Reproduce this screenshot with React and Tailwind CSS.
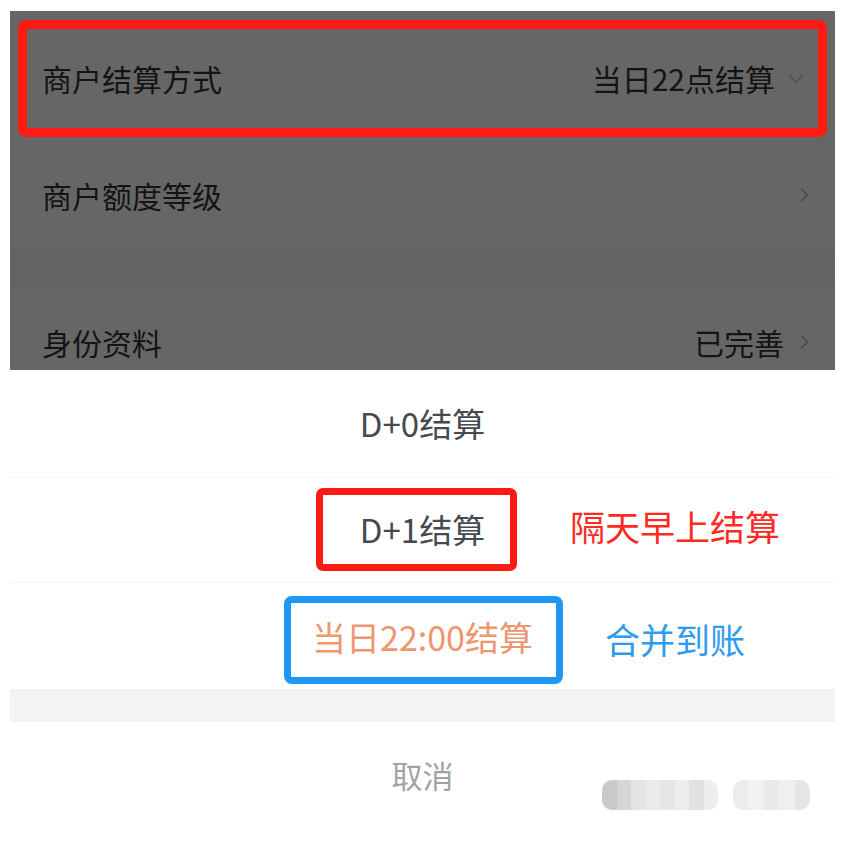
import React from "react";

const FONT = { fontFamily: '"Noto Sans CJK SC", "Noto Sans", sans-serif' };

function ChevronRight({ className }) {
    return (
        <svg viewBox="0 0 12 20" className={className} fill="none" stroke="currentColor" strokeWidth="1.8" strokeLinecap="round" strokeLinejoin="round">
            <path d="M2 2l8 8-8 8" />
        </svg>
    );
}

function ChevronDown({ className }) {
    return (
        <svg viewBox="0 0 20 12" className={className} fill="none" stroke="currentColor" strokeWidth="1.8" strokeLinecap="round" strokeLinejoin="round">
            <path d="M2 2l8 8 8-8" />
        </svg>
    );
}

// pixelated blur that hides a watermark
const blobA = ["#c9c9c9", "#d6d6d6", "#e4e4e4", "#ebebeb", "#e6e6e6", "#ededed", "#e2e2e2", "#eeeeee"];
const blobB = ["#ececec", "#f1f1f1", "#e9e9e9", "#efefef", "#e5e5e5"];

export default function App() {
    return (
        <div className="min-h-[865px] bg-white pt-[11px] pl-[10px] pr-[8px]" style={FONT}>
            {/* dimmed settings page */}
            <div className="bg-[#666666] h-[359px] overflow-hidden">
                <div className="px-[8px] pt-[9px] pb-[3px]">
                    <div className="h-[117px] border-[9px] border-[#ff1a14] rounded-[8px] flex items-center justify-between pl-[15px] pr-[14px]">
                        <span className="text-[30px] text-[#141414]">商户结算方式</span>
                        <div className="flex items-center gap-[13px]">
                            <span className="text-[30px] text-[#141414]">当日22点结算</span>
                            <ChevronDown className="w-[16px] h-[10px] text-[#505050]" />
                        </div>
                    </div>
                </div>
                <div className="h-[110px] flex items-center justify-between pl-[32px] pr-[26px]">
                    <span className="text-[30px] text-[#141414]">商户额度等级</span>
                    <ChevronRight className="w-[9px] h-[16px] text-[#484848]" />
                </div>
                <div className="h-[36px] bg-[#636363]" />
                <div className="h-[112px] flex items-center justify-between pl-[32px] pr-[26px]">
                    <span className="text-[30px] text-[#141414]">身份资料</span>
                    <div className="flex items-center gap-[16px]">
                        <span className="text-[30px] text-[#141414]">已完善</span>
                        <ChevronRight className="w-[9px] h-[16px] text-[#484848]" />
                    </div>
                </div>
            </div>

            {/* action sheet */}
            <div className="bg-white">
                <div className="h-[108px] flex items-center justify-center border-b border-[#f3f4f4]">
                    <span className="text-[33px] text-[#454a50]">D+0结算</span>
                </div>
                <div className="relative h-[105px] flex items-center justify-center border-b border-[#f3f4f4]">
                    <span className="text-[33px] text-[#454a50]">D+1结算</span>
                    <div className="absolute left-[306px] top-[10px] w-[201px] h-[83px] border-[7px] border-[#ff1a14] rounded-[7px]" />
                    <span className="absolute left-[560px] top-[22px] text-[35px] text-[#ff2a22]">隔天早上结算</span>
                </div>
                <div className="relative h-[106px] flex items-center justify-center">
                    <span className="text-[34px] text-[#ee9670]">当日22:00结算</span>
                    <div className="absolute left-[274px] top-[13px] w-[279px] h-[88px] border-[7px] border-[#1e97f6] rounded-[8px]" />
                    <span className="absolute left-[595px] top-[30px] text-[35px] text-[#2f9bef]">合并到账</span>
                </div>
                <div className="h-[33px] bg-[#f2f4f4]" />
                <div className="relative h-[106px] flex items-center justify-center">
                    <span className="text-[31px] text-[#a0a3a6]">取消</span>
                    <div className="absolute left-[592px] top-[58px] flex gap-[15px]">
                        <div className="flex w-[116px] h-[30px] rounded-[10px] overflow-hidden">
                            {blobA.map((c, i) => (
                                <div key={i} className="flex-1" style={{ backgroundColor: c }} />
                            ))}
                        </div>
                        <div className="flex w-[77px] h-[30px] rounded-[10px] overflow-hidden">
                            {blobB.map((c, i) => (
                                <div key={i} className="flex-1" style={{ backgroundColor: c }} />
                            ))}
                        </div>
                    </div>
                </div>
            </div>
        </div>
    );
}
